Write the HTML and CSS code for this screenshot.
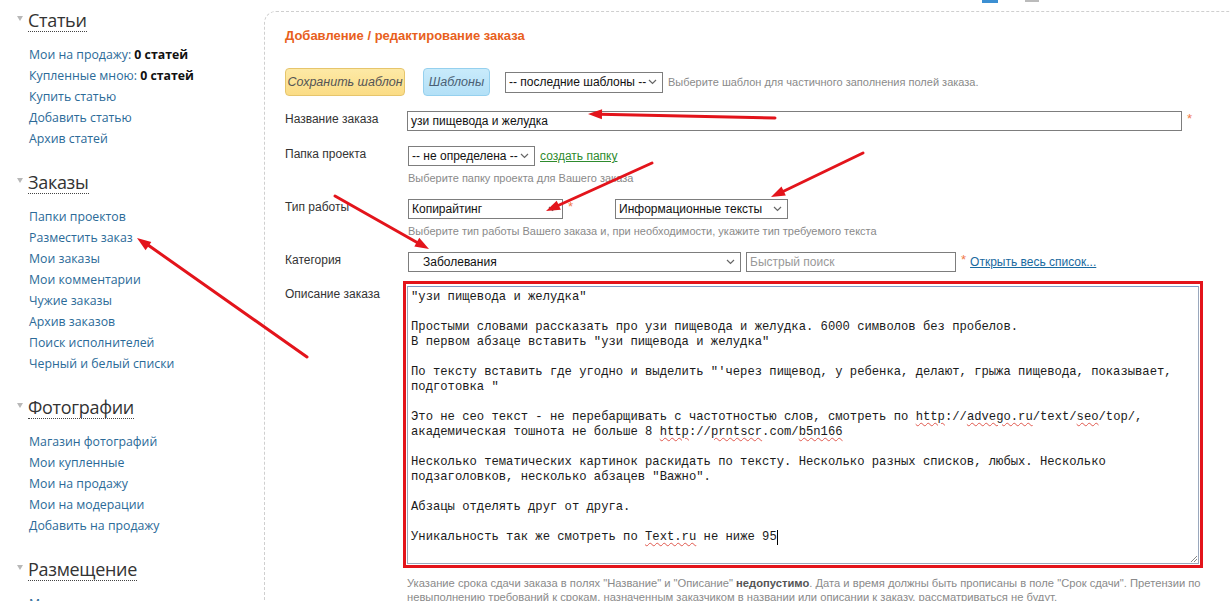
FILE: index.html
```html
<!DOCTYPE html>
<html lang="ru">
<head>
<meta charset="utf-8">
<title>Добавление / редактирование заказа</title>
<link rel="stylesheet" href="styles.css">
</head>
<body>
<div class="page">
  <aside class="sidebar">
    <section class="side-section">
      <div class="side-head"><span class="tri"></span><h2>Статьи</h2></div>
      <ul class="side-links">
        <li><a href="#">Мои на продажу:</a> <b>0 статей</b></li>
        <li><a href="#">Купленные мною:</a> <b>0 статей</b></li>
        <li><a href="#">Купить статью</a></li>
        <li><a href="#">Добавить статью</a></li>
        <li><a href="#">Архив статей</a></li>
      </ul>
    </section>
    <section class="side-section">
      <div class="side-head"><span class="tri"></span><h2>Заказы</h2></div>
      <ul class="side-links">
        <li><a href="#">Папки проектов</a></li>
        <li><a href="#">Разместить заказ</a></li>
        <li><a href="#">Мои заказы</a></li>
        <li><a href="#">Мои комментарии</a></li>
        <li><a href="#">Чужие заказы</a></li>
        <li><a href="#">Архив заказов</a></li>
        <li><a href="#">Поиск исполнителей</a></li>
        <li><a href="#">Черный и белый списки</a></li>
      </ul>
    </section>
    <section class="side-section">
      <div class="side-head"><span class="tri"></span><h2>Фотографии</h2></div>
      <ul class="side-links">
        <li><a href="#">Магазин фотографий</a></li>
        <li><a href="#">Мои купленные</a></li>
        <li><a href="#">Мои на продажу</a></li>
        <li><a href="#">Мои на модерации</a></li>
        <li><a href="#">Добавить на продажу</a></li>
      </ul>
    </section>
    <section class="side-section">
      <div class="side-head"><span class="tri"></span><h2>Размещение</h2></div>
      <ul class="side-links">
        <li><a href="#">Мои площадки</a></li>
      </ul>
    </section>
  </aside>

  <main class="main">
    <div class="topbar"><span class="top-blue"></span><span class="top-grey"></span></div>
    <div class="panel">
      <h1 class="title">Добавление / редактирование заказа</h1>

      <div class="toolbar">
        <span class="btn btn-yellow">Сохранить шаблон</span>
        <span class="btn btn-blue">Шаблоны</span>
        <span class="select sel-templates">-- последние шаблоны -- <svg class="chev" width="9" height="6" viewBox="0 0 9 6"><path d="M1 1l3.5 3.5L8 1" fill="none" stroke="#666" stroke-width="1.2"/></svg></span>
        <span class="hint">Выберите шаблон для частичного заполнения полей заказа.</span>
      </div>

      <div class="row row-name">
        <label class="label">Название заказа</label>
        <div class="field">
          <span class="input input-name">узи пищевода и желудка</span><span class="req">*</span>
        </div>
      </div>

      <div class="row row-folder">
        <label class="label">Папка проекта</label>
        <div class="field">
          <div class="line">
            <span class="select sel-folder">-- не определена -- <svg class="chev" width="9" height="6" viewBox="0 0 9 6"><path d="M1 1l3.5 3.5L8 1" fill="none" stroke="#666" stroke-width="1.2"/></svg></span>
            <a href="#" class="green-link">создать папку</a>
          </div>
          <div class="hint hint-below">Выберите папку проекта для Вашего заказа</div>
        </div>
      </div>

      <div class="row row-type">
        <label class="label">Тип работы</label>
        <div class="field">
          <div class="line">
            <span class="select sel-type">Копирайтинг <svg class="chev" width="9" height="6" viewBox="0 0 9 6"><path d="M1 1l3.5 3.5L8 1" fill="none" stroke="#666" stroke-width="1.2"/></svg></span><span class="req">*</span>
            <span class="select sel-subtype">Информационные тексты <svg class="chev" width="9" height="6" viewBox="0 0 9 6"><path d="M1 1l3.5 3.5L8 1" fill="none" stroke="#666" stroke-width="1.2"/></svg></span>
          </div>
          <div class="hint hint-below">Выберите тип работы Вашего заказа и, при необходимости, укажите тип требуемого текста</div>
        </div>
      </div>

      <div class="row row-cat">
        <label class="label">Категория</label>
        <div class="field">
          <div class="line">
            <span class="select sel-cat"><span class="cat-text">Заболевания</span> <svg class="chev" width="9" height="6" viewBox="0 0 9 6"><path d="M1 1l3.5 3.5L8 1" fill="none" stroke="#666" stroke-width="1.2"/></svg></span>
            <span class="input input-search">Быстрый поиск</span><span class="req">*</span>
            <a href="#" class="blue-link">Открыть весь список...</a>
          </div>
        </div>
      </div>

      <div class="row row-desc">
        <label class="label label-desc">Описание заказа</label>
        <div class="field">
          <div class="red-frame">
            <div class="textarea">"узи пищевода и желудка"

Простыми словами рассказать про узи пищевода и желудка. 6000 символов без пробелов.
В первом абзаце вставить "узи пищевода и желудка"

По тексту вставить где угодно и выделить "'через пищевод, у ребенка, делают, грыжа пищевода, показывает,
подготовка "

Это не сео текст - не перебарщивать с частотностью слов, смотреть по <span class="sp">http</span>://<span class="sp">advego.ru</span>/text/<span class="sp">seo</span>/top/,
академическая тошнота не больше 8 <span class="sp">http</span>://<span class="sp">prntscr</span>.com/<span class="sp">b5n166</span>

Несколько тематических картинок раскидать по тексту. Несколько разных списков, любых. Несколько
подзаголовков, несколько абзацев "Важно".

Абзацы отделять друг от друга.

Уникальность так же смотреть по <span class="sp">Text.ru</span> не ниже 95<span class="caret"></span></div>
            <svg class="grip" width="9" height="9" viewBox="0 0 9 9"><path d="M8 2L2 8M8 5L5 8" stroke="#888" stroke-width="1"/></svg>
          </div>
          <div class="hint hint-note">Указание срока сдачи заказа в полях "Название" и "Описание" <b>недопустимо</b>. Дата и время должны быть прописаны в поле "Срок сдачи". Претензии по невыполнению требований к срокам, назначенным заказчиком в названии или описании к заказу, рассматриваться не будут.</div>
        </div>
      </div>
    </div>
  </main>
</div>

<svg class="annotations" width="1231" height="601" viewBox="0 0 1231 601">
  <g stroke="#e3141b" stroke-width="3" stroke-linecap="round" fill="none">
    <path d="M775 118 L600 114.3"/>
    <path d="M652 163 L557 206"/>
    <path d="M863 153 L782 192"/>
    <path d="M335 196 L418 243"/>
    <path d="M307 357 L148 245"/>
  </g>
  <g fill="#e3141b">
    <polygon points="588,114 602.1,109.3 601.9,119.3"/>
    <polygon points="546,211 556.7,200.7 560.8,209.8"/>
    <polygon points="771,197 781.5,186.45 785.8,195.5"/>
    <polygon points="429,249 414.34,246.48 419.26,237.76"/>
    <polygon points="137,238 151.34,241.93 145.6,250.13"/>
  </g>
</svg>
</body>
</html>
```

FILE: styles.css
```css
html, body {
  margin: 0;
  padding: 0;
}
body {
  position: relative;
  height: 601px;
  overflow: hidden;
  background: #fff;
  font-family: "Liberation Sans", Arial, sans-serif;
  color: #333;
}
.page {
  display: flex;
  align-items: flex-start;
}

/* Sidebar */
.sidebar {
  flex: 0 0 264px;
  box-sizing: border-box;
  padding: 9px 0 0 17px;
}
.side-section {
  margin-bottom: 22px;
}
.side-head {
  display: flex;
  align-items: center;
  gap: 5px;
}
.tri {
  width: 0;
  height: 0;
  border-left: 3.5px solid transparent;
  border-right: 3.5px solid transparent;
  border-top: 5px solid #b8b8b8;
  margin-top: -4px;
}
.side-head h2 {
  margin: 0;
  font-family: "Open Sans", "Liberation Sans", sans-serif;
  font-weight: 400;
  font-size: 18px;
  letter-spacing: -0.3px;
  line-height: 22px;
  color: #333;
  border-bottom: 1px dotted #444;
}
.side-links {
  list-style: none;
  margin: 12px 0 0 12px;
  padding: 0;
  font-family: "Open Sans", "Liberation Sans", sans-serif;
  font-size: 12.3px;
  line-height: 21px;
}
.side-links a {
  color: #2b6a98;
  text-decoration: none;
}
.side-links b {
  color: #111;
  font-weight: 700;
}

/* Main */
.main {
  flex: 0 0 958px;
  display: flex;
  flex-direction: column;
}
.topbar {
  height: 11px;
  display: flex;
  align-items: flex-start;
  padding-left: 718px;
  gap: 27px;
}
.top-blue {
  width: 16px;
  height: 3px;
  background: #3c8fd2;
}
.top-grey {
  width: 14px;
  height: 2px;
  background: #bbb;
}
.panel {
  box-sizing: border-box;
  height: 700px;
  border: 1px dashed #cfcfcf;
  border-bottom: none;
  border-radius: 12px 12px 0 0;
  padding: 16px 20px 0 20px;
}
.title {
  margin: 0 0 24px;
  font-size: 13px;
  line-height: 16px;
  font-weight: 700;
  color: #e8601c;
}

.toolbar {
  display: flex;
  align-items: center;
  height: 28px;
}
.btn {
  box-sizing: border-box;
  height: 28px;
  display: inline-flex;
  align-items: center;
  justify-content: center;
  border-radius: 4px;
  font-size: 12.5px;
  font-style: italic;
  white-space: nowrap;
}
.btn-yellow {
  width: 120px;
  background: linear-gradient(#fde9a6, #fbdc85);
  border: 1px solid #e6c56c;
  color: #555;
}
.btn-blue {
  width: 67px;
  margin-left: 18px;
  background: linear-gradient(#c9ebfb, #b3e0f7);
  border: 1px solid #95d0ee;
  color: #4a5f74;
}
.select {
  box-sizing: border-box;
  height: 20px;
  display: inline-flex;
  align-items: center;
  justify-content: space-between;
  border: 1px solid #7d7d7d;
  background: #fff;
  padding: 0 5px 0 3px;
  font-size: 12px;
  color: #111;
  white-space: nowrap;
}
.chev {
  flex: none;
}
.sel-templates {
  width: 158px;
  margin-left: 15px;
  height: 21px;
}
.hint {
  font-size: 11px;
  line-height: 14px;
  color: #8a8a8a;
}
.toolbar .hint {
  margin-left: 5px;
}

.row {
  display: grid;
  grid-template-columns: 122px 1fr;
}
.label {
  font-size: 12px;
  line-height: 17px;
  color: #333;
}
.row-name { margin-top: 15px; }
.row-folder { margin-top: 15px; }
.row-type { margin-top: 14px; }
.row-cat { margin-top: 14px; }
.row-desc { margin-top: 9px; }

.field {
  display: flex;
  flex-direction: column;
  align-items: flex-start;
}
.row-name .field {
  flex-direction: row;
}
.line {
  display: flex;
  align-items: center;
  height: 20px;
}
.input {
  box-sizing: border-box;
  height: 20px;
  display: inline-flex;
  align-items: center;
  border: 1px solid #7d7d7d;
  background: #fff;
  padding: 0 3px;
  font-size: 12px;
  color: #111;
  white-space: nowrap;
}
.input-name {
  width: 775px;
}
.req {
  color: #f07a4a;
  font-size: 13px;
  margin-left: 5px;
  align-self: flex-start;
  line-height: 16px;
}
.sel-folder {
  width: 127px;
  margin-left: 1px;
}
.green-link {
  margin-left: 5px;
  color: #2e8b2e;
  font-size: 12px;
}
.hint-below {
  margin-top: 5px;
  margin-left: 1px;
}
.sel-type {
  width: 155px;
  margin-left: 1px;
}
.sel-subtype {
  width: 173px;
  margin-left: 42px;
}
.sel-cat {
  width: 333px;
  margin-left: 1px;
}
.cat-text {
  padding-left: 11px;
}
.input-search {
  width: 210px;
  margin-left: 5px;
  color: #999;
}
.blue-link {
  margin-left: 4px;
  color: #1a6aa0;
  font-size: 12px;
}

.label-desc {
  padding-top: 5px;
}
.red-frame {
  position: relative;
  margin-left: -4px;
  width: 800px;
  box-sizing: border-box;
  border: 3px solid #e3141b;
  padding: 2px 1px 1px 1px;
}
.textarea {
  box-sizing: border-box;
  height: 278px;
  border: 1px solid #9aa8bd;
  border-top-color: #7d9bc6;
  padding: 3px 3px;
  font-family: "Liberation Mono", "DejaVu Sans Mono", monospace;
  font-size: 12.2px;
  line-height: 15px;
  color: #1a1a1a;
  white-space: pre;
  overflow: hidden;
}
.sp {
  text-decoration: underline wavy #e0584e;
  text-decoration-thickness: 1px;
  text-underline-offset: 2px;
}
.caret {
  display: inline-block;
  width: 1px;
  height: 15px;
  background: #000;
  vertical-align: top;
}
.grip {
  position: absolute;
  right: 2px;
  bottom: 2px;
}
.hint-note {
  margin-top: 8px;
  width: 812px;
  font-size: 11.2px;
}
.hint-note b {
  color: #555;
}

.annotations {
  position: absolute;
  left: 0;
  top: 0;
  pointer-events: none;
}
```
